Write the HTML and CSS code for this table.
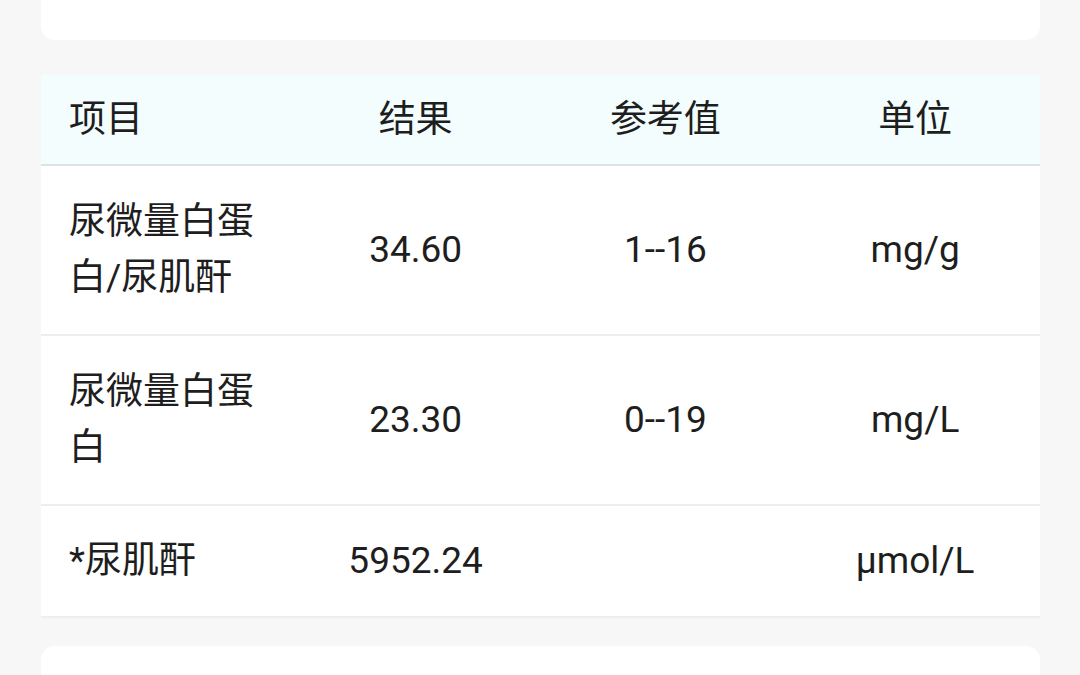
FILE: index.html
```html
<!DOCTYPE html>
<html lang="zh">
<head>
<meta charset="utf-8">
<link rel="stylesheet" href="styles.css">
</head>
<body>
<div class="card top-card"></div>
<div class="card table-card">
  <div class="row head">
    <div class="cell name">项目</div>
    <div class="cell">结果</div>
    <div class="cell">参考值</div>
    <div class="cell">单位</div>
  </div>
  <div class="row">
    <div class="cell name">尿微量白蛋白/尿肌酐</div>
    <div class="cell">34.60</div>
    <div class="cell">1--16</div>
    <div class="cell">mg/g</div>
  </div>
  <div class="row">
    <div class="cell name">尿微量白蛋白</div>
    <div class="cell">23.30</div>
    <div class="cell">0--19</div>
    <div class="cell">mg/L</div>
  </div>
  <div class="row last">
    <div class="cell name">*尿肌酐</div>
    <div class="cell">5952.24</div>
    <div class="cell"></div>
    <div class="cell">μmol/L</div>
  </div>
</div>
<div class="card bottom-card"></div>
</body>
</html>
```
FILE: styles.css
```css
html, body {
  margin: 0;
  padding: 0;
  background: #f7f7f7;
}
body {
  padding: 0 40px 0 41px;
  font-family: Roboto, "Noto Sans CJK SC", sans-serif;
  font-size: 37px;
  color: #1e1e1e;
  overflow: hidden;
  height: 675px;
  box-sizing: border-box;
}
.card {
  background: #fff;
}
.top-card {
  height: 40px;
  border-radius: 0 0 14px 14px;
  margin-bottom: 35px;
}
.table-card {
  margin-bottom: 28px;
}
.row {
  display: grid;
  grid-template-columns: repeat(4, 1fr);
  align-items: center;
  border-bottom: 2px solid #eeeeee;
}
.row.head {
  background: #f3fdfd;
  border-bottom-color: #dbe3e3;
}
.cell {
  padding: 28px 28px;
  line-height: 56px;
  text-align: center;
}
.head .cell {
  padding-top: 16.5px;
  padding-bottom: 16.5px;
}
.row.last .cell {
  padding-top: 27px;
  padding-bottom: 27px;
}
.cell.name {
  text-align: left;
}
.bottom-card {
  height: 40px;
  border-radius: 14px 14px 0 0;
}
```
